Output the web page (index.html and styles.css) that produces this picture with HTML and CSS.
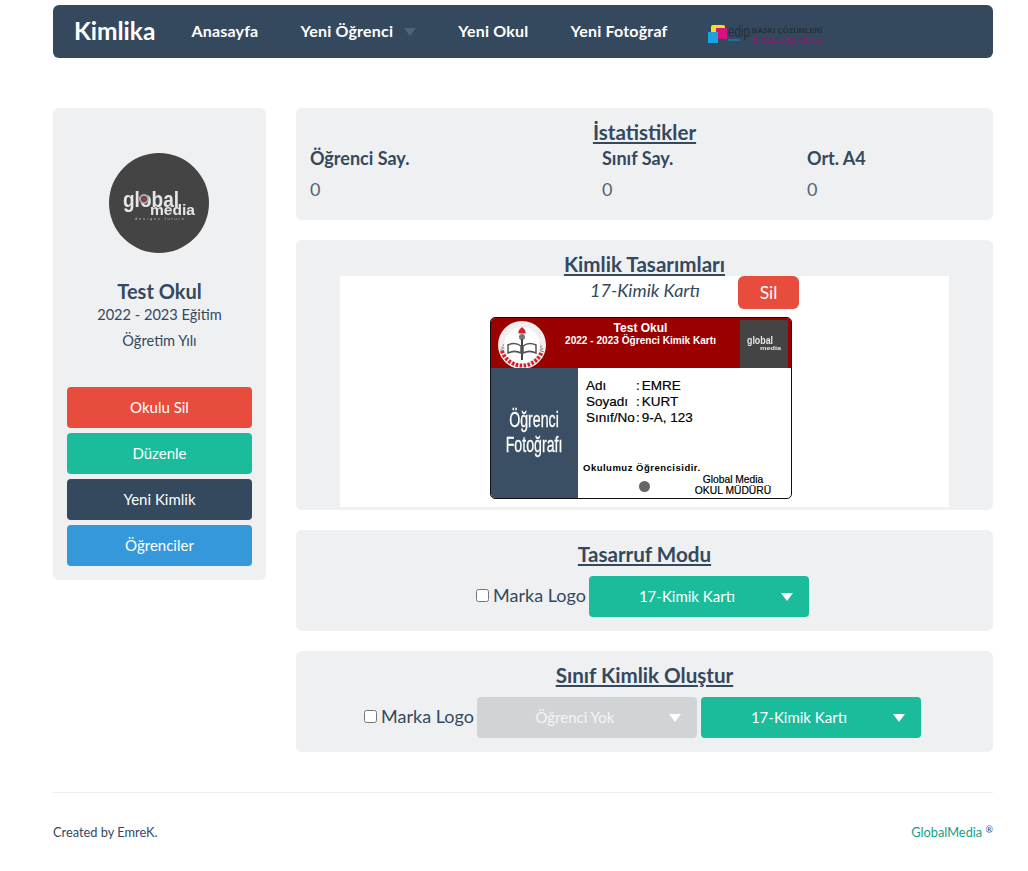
FILE: index.html
```html
<!DOCTYPE html>
<html lang="tr">
<head>
	<meta charset="UTF-8">
	<title>Kimlika</title>
	<link rel="stylesheet" href="styles.css">
</head>
<body>
	<div class="page">
		<nav class="navbar">
			<a class="brand">Kimlika</a>
			<a class="nav-link">Anasayfa</a>
			<a class="nav-link nav-drop">Yeni Öğrenci<i class="nav-caret"></i></a>
			<a class="nav-link">Yeni Okul</a>
			<a class="nav-link">Yeni Fotoğraf</a>
			<svg class="nav-logo" width="116" height="22" viewBox="0 0 116 22">
				<rect x="3" y="3" width="14" height="14" rx="2" fill="#f4e01c"/>
				<rect x="8" y="6" width="11" height="11" fill="#d6127f"/>
				<rect x="0" y="10" width="10" height="11" fill="#19a4e0"/>
				<text x="20" y="15" font-family="Liberation Sans" font-size="17" fill="#222f3c" textLength="22" lengthAdjust="spacingAndGlyphs">edip</text>
				<rect x="20" y="17" width="12" height="2" fill="#1c6f9e"/>
				<text x="44" y="11" font-family="Liberation Sans" font-weight="700" font-size="7" fill="#24303d" textLength="70" lengthAdjust="spacingAndGlyphs">BASKI ÇÖZÜMLERİ</text>
				<text x="45" y="21" font-family="Liberation Sans" font-weight="700" font-size="9" fill="#8d1a70" textLength="69" lengthAdjust="spacing">0 362 542 41 51</text>
			</svg>
		</nav>

		<div class="layout">
			<aside class="side">
				<div class="avatar">
					<svg width="100" height="100" viewBox="0 0 100 100">
						<circle cx="50" cy="50" r="50" fill="#444"/>
						<text x="14" y="54" class="logo-txt" font-size="22" textLength="56" lengthAdjust="spacingAndGlyphs">global</text>
						<text x="41" y="62" class="logo-txt" font-size="14" textLength="45" lengthAdjust="spacingAndGlyphs">media</text>
						<circle cx="35" cy="46" r="4" fill="#444" stroke="#aaa" stroke-width="2"/>
						<circle cx="35" cy="46" r="2" fill="#b33"/>
						<text x="26" y="67" class="logo-sub" font-size="4" textLength="49">designs future</text>
					</svg>
				</div>
				<h3 class="school">Test Okul</h3>
				<p class="term">2022 - 2023 Eğitim Öğretim Yılı</p>
				<div class="side-btns">
					<a class="btn btn-red">Okulu Sil</a>
					<a class="btn btn-green">Düzenle</a>
					<a class="btn btn-dark">Yeni Kimlik</a>
					<a class="btn btn-blue">Öğrenciler</a>
				</div>
			</aside>

			<main class="content">
				<section class="panel panel-stats">
					<h4 class="panel-title">İstatistikler</h4>
					<div class="stats">
						<div><b>Öğrenci Say.</b><span>0</span></div>
						<div><b>Sınıf Say.</b><span>0</span></div>
						<div><b>Ort. A4</b><span>0</span></div>
					</div>
				</section>

				<section class="panel panel-designs">
					<h4 class="panel-title">Kimlik Tasarımları</h4>
					<div class="preview">
						<div class="preview-head">
							<em>17-Kimik Kartı</em>
							<a class="btn btn-red btn-sil">Sil</a>
						</div>
						<div class="idcard">
							<div class="idcard-top">
								<svg class="seal" width="50" height="50" viewBox="0 0 50 50">
									<circle cx="25" cy="25" r="24" fill="#f3eeee"/>
									<path d="M5 31a21 21 0 0 1 40 0" fill="none" stroke="#9a9a9a" stroke-width="4" stroke-dasharray="1.500 1"/>
									<path d="M5 31a21 21 0 0 0 40 0" fill="none" stroke="#d9202a" stroke-width="4" stroke-dasharray="2.500 1.500"/>
									<circle cx="25" cy="25" r="18" fill="#fff"/>
									<path d="M25 7c3 2.500 4 4 3.500 6.500h-7c-.5-2.500.5-4 3.500-6.500z" fill="#d9202a"/>
									<circle cx="25" cy="17" r="3" fill="#777"/>
									<path d="M24 19h2v21h-2z" fill="#444"/>
									<path d="M11 25c4-2 9-2 13 1v7c-4-2-9-2-13 0zM39 25c-4-2-9-2-13 1v7c4-2 9-2 13 0z" fill="none" stroke="#555" stroke-width="1.500"/>
								</svg>
								<div class="idcard-title">
									<strong>Test Okul</strong>
									<span>2022 - 2023 Öğrenci Kimik Kartı</span>
								</div>
								<svg class="idcard-logo" width="48" height="48" viewBox="0 0 48 48">
									<rect width="48" height="48" fill="#444"/>
									<text x="7" y="24" class="logo-txt" font-size="11" textLength="26" lengthAdjust="spacingAndGlyphs">global</text>
									<text x="20" y="30" class="logo-txt" font-size="6" textLength="21" lengthAdjust="spacingAndGlyphs">media</text>
								</svg>
							</div>
							<div class="idcard-body">
								<div class="photo"><span>Öğrenci<br>Fotoğrafı</span></div>
								<div class="info">
									<dl class="fields">
										<dt>Adı</dt><dd>EMRE</dd>
										<dt>Soyadı</dt><dd>KURT</dd>
										<dt>Sınıf/No</dt><dd>9-A, 123</dd>
									</dl>
									<p class="note">Okulumuz Öğrencisidir.</p>
									<i class="stamp"></i>
									<p class="sign">Global Media<br>OKUL MÜDÜRÜ</p>
								</div>
							</div>
						</div>
					</div>
				</section>

				<section class="panel">
					<h4 class="panel-title">Tasarruf Modu</h4>
					<div class="form-row">
						<label class="check"><input type="checkbox">Marka Logo</label>
						<a class="select">17-Kimik Kartı<i></i></a>
					</div>
				</section>

				<section class="panel">
					<h4 class="panel-title">Sınıf Kimlik Oluştur</h4>
					<div class="form-row">
						<label class="check"><input type="checkbox">Marka Logo</label>
						<a class="select select-off">Öğrenci Yok<i></i></a>
						<a class="select">17-Kimik Kartı<i></i></a>
					</div>
				</section>
			</main>
		</div>

		<footer class="footer">
			<span>Created by EmreK.</span>
			<a class="footer-link">GlobalMedia <sup>®</sup></a>
		</footer>
	</div>
</body>
</html>
```

FILE: styles.css
```css
*{margin:0;padding:0;box-sizing:border-box;}
body{font-family:"Lato","Liberation Sans",sans-serif;color:#34495e;background:#fff;font-size:18px;}
.page{width:940px;margin:0 0 0 53px;padding-top:5px;}

.navbar{height:53px;background:#34495e;border-radius:6px;display:flex;align-items:center;gap:42px;padding:0 0 2px 21px;color:#fff;}
.brand{font-size:24.500px;font-weight:700;margin-right:-6px;}
.nav-link{font-size:16px;font-weight:700;letter-spacing:.2px;display:flex;align-items:center;}
.nav-caret{width:0;height:0;border-style:solid;border-width:8px 6px 0;border-color:#4f647a transparent transparent;margin-left:11px;margin-top:2px;}
.nav-logo{filter:blur(.4px);margin:5px 0 0 -2px;}

.layout{display:flex;gap:30px;margin-top:50px;align-items:flex-start;}
.side{width:213px;height:472px;background:#eff0f2;border-radius:6px;padding:45px 14px 0;text-align:center;}
.avatar{width:100px;height:100px;margin-left:42px;}
.avatar svg,.idcard-logo{filter:blur(.3px);}
.logo-txt{font-family:"Liberation Sans",sans-serif;font-weight:700;fill:#e6e6e6;}
.logo-sub{font-family:"Liberation Sans",sans-serif;fill:#bbb;}
.school{font-size:20px;font-weight:700;line-height:26px;margin-top:25px;}
.term{font-size:14.600px;line-height:26px;width:150px;margin:-2px auto 0;}
.side-btns{display:flex;flex-direction:column;gap:5px;margin-top:33px;}

.btn{display:block;height:41px;line-height:41px;border-radius:4px;font-size:15px;color:#fff;text-align:center;}
.btn-red{background:#e74c3c;}
.btn-green{background:#1abc9c;}
.btn-dark{background:#34495e;}
.btn-blue{background:#3498db;}

.content{width:697px;display:flex;flex-direction:column;gap:20px;}
.panel{background:#eff0f2;border-radius:6px;padding:12px 14px 14px;text-align:center;}
.panel-title{font-size:20.600px;font-weight:700;line-height:24px;text-decoration:underline;}
.panel-stats{height:112px;text-align:left;}
.panel-stats .panel-title{text-align:center;}
.stats{display:grid;grid-template-columns:292px 205px 1fr;margin-top:1px;}
.stats b{display:block;font-size:18px;line-height:26px;}
.stats span{display:block;font-size:18px;line-height:36px;color:#526475;}

.panel-designs{height:270px;padding-bottom:0;}
.preview{width:609px;height:231px;margin:0 0 0 30px;background:#fff;}
.preview-head{display:flex;justify-content:flex-end;align-items:flex-start;height:41px;position:relative;}
.preview-head em{font-size:18px;line-height:29px;position:absolute;left:250px;}
.btn-sil{width:61px;height:33px;line-height:33px;font-size:17.500px;border-radius:6px;margin-right:150px;}

.idcard{width:302px;height:182px;margin-left:150px;border:1px solid #111;border-radius:5px;overflow:hidden;font-family:"Liberation Sans",Arial,sans-serif;color:#000;text-align:left;}
.idcard-top{height:50px;background:#9b0000;display:flex;color:#fff;}
.seal{margin:2px 0 0 6px;flex:none;}
.idcard-title{flex:1;text-align:center;font-weight:700;padding:4px 6px 0 0;}
.idcard-title strong{display:block;font-size:12px;line-height:13px;}
.idcard-title span{display:block;font-size:10.100px;line-height:11px;}
.idcard-logo{margin:2px 3px 0 0;flex:none;}
.idcard-body{display:flex;height:130px;}
.photo{width:87px;background:#3a4f63;color:#fff;display:flex;align-items:center;justify-content:center;text-align:center;font-size:21.500px;line-height:25px;-webkit-text-stroke:.3px #fff;}
.photo span{display:block;transform:scaleX(.66);white-space:nowrap;}
.info{flex:1;position:relative;padding:10px 0 0 8px;}
.fields{display:grid;grid-template-columns:50px 1fr;font-size:13.500px;line-height:16px;-webkit-text-stroke:.2px #000;}
.fields dd::before{content:":";margin-right:2px;}
.note{position:absolute;left:5px;top:94px;font-size:9.500px;font-weight:700;letter-spacing:.5px;}
.stamp{position:absolute;left:61px;top:113px;width:11px;height:11px;border-radius:50%;background:#666;}
.sign{position:absolute;right:13px;top:106px;width:90px;text-align:center;font-size:10.300px;line-height:11px;-webkit-text-stroke:.2px #000;}

.form-row{display:flex;justify-content:center;align-items:center;gap:3px;margin-top:10px;height:41px;padding-right:4px;}
.check{display:flex;align-items:center;font-size:18px;padding-bottom:4px;}
.check input{width:13px;height:13px;margin:2px 4px 0 0;}
.select{width:220px;height:41px;line-height:41px;border-radius:4px;background:#1abc9c;color:#fff;font-size:15px;text-align:center;position:relative;padding-right:24px;}
.select i{position:absolute;right:16px;top:17px;width:0;height:0;border-style:solid;border-width:8px 6px 0;border-color:#fff transparent transparent;}
.select-off{background:#d1d4d7;color:#f4f5f6;}
.form-row .select + .select{margin-left:1px;}

.footer{margin-top:40px;border-top:1px solid #eee;display:flex;justify-content:space-between;align-items:flex-start;padding-top:30px;font-size:12.800px;line-height:18px;}
.footer-link{color:#16a085;}
.footer-link sup{font-size:9px;line-height:0;color:#34495e;vertical-align:4px;}
```
